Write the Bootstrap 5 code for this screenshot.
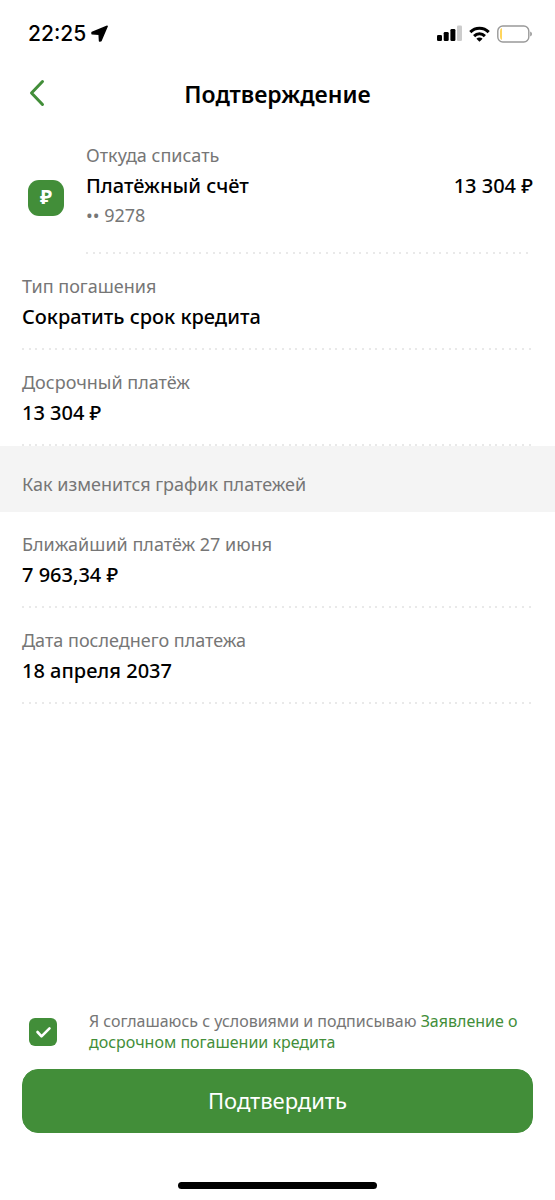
<!DOCTYPE html>
<html lang="ru">
<head>
<meta charset="utf-8">
<meta name="viewport" content="width=device-width, initial-scale=1">
<title>Подтверждение</title>
<link href="https://cdn.jsdelivr.net/npm/bootstrap@5.3.0/dist/css/bootstrap.min.css" rel="stylesheet">
<style>
  :root { --brand: #428e39; --muted: #767676; --side: 22px; }
  body { font-family: "Noto Sans", "Open Sans", sans-serif; color: #000; background: #fff; }
  .side { padding-left: var(--side); padding-right: var(--side); }
  .status { height: 66px; padding: 1px 23px 0 28px; font-family: Inter, sans-serif; font-size: 21px; font-weight: 500; line-height: 24px; }
  .status-icons { gap: 7px; }
  .topbar { display: grid; grid-template-columns: 32px 1fr 32px; height: 56px; }
  .topbar h1 { font-size: 23px; line-height: 32px; font-weight: 600; }
  .back { width: 32px; height: 32px; }
  .caption { font-size: 18px; line-height: 30px; color: var(--muted); font-weight: 400; }
  .value { font-size: 20px; line-height: 32px; font-weight: 500; }
  .dotted::after { content: ""; display: block; height: 2px;
    background: linear-gradient(90deg, #e9e9e9 2px, transparent 2px 7px, #e9e9e9 7px 9px, transparent 9px 13px, #e9e9e9 13px 15px, transparent 15px) 0 0 / 20px 2px; }
  .account { padding-top: 18px; }
  .account-icon { width: 36px; height: 36px; margin: 40px 22px 0 6px; border-radius: 11px; background: var(--brand); color: #fff; font-size: 20px; line-height: 34px; font-weight: 700; }
  .account-text { padding-bottom: 24px; }
  .account-text .account-number { line-height: 26px; }
  .detail { padding-top: 17px; }
  .detail dd { padding-bottom: 15px; }
  .band { background: #f4f4f4; padding-top: 23px; padding-bottom: 13px; }
  .agree { gap: 32px; padding: 0 6px 0 7px; }
  .agree .form-check-input { width: 28px; height: 28px; border-radius: 6px; border: 0; background-size: 28px; }
  .agree .form-check-input:checked { background-color: var(--brand);
    background-image: url("data:image/svg+xml,%3Csvg xmlns='http://www.w3.org/2000/svg' viewBox='0 0 28 28'%3E%3Cpath d='M8.5 14l4 4.3 8-8' fill='none' stroke='%23fff' stroke-width='2.6' stroke-linecap='round' stroke-linejoin='round'/%3E%3C/svg%3E"); }
  .agree label { font-size: 16px; line-height: 21px; color: var(--muted); }
  .agree a { color: var(--brand); }
  .confirm { height: 64px; margin-top: 16px; border-radius: 16px; font-size: 22px; line-height: 32px; padding: 0 0 2px;
    --bs-btn-color: #fff; --bs-btn-bg: var(--brand); --bs-btn-border-color: var(--brand); --bs-btn-hover-color: #fff; --bs-btn-hover-bg: #387a30; --bs-btn-hover-border-color: #387a30; }
  .home { width: 36%; height: 7px; margin: 49px auto 11px; background: #000; }
</style>
</head>
<body>
<div class="min-vh-100 d-flex flex-column">
  <div class="status d-flex align-items-center justify-content-between">
    <div class="d-flex align-items-center gap-1">
      <span>22:25</span>
      <svg width="18" height="18" viewBox="0 0 18 18" aria-hidden="true"><path d="M17.200 1.200 11 15.800 9.500 16 9.100 9.200 2 8.700 2 7.500Z" fill="#000" stroke="#000" stroke-width="1.400" stroke-linejoin="round"/></svg>
    </div>
    <div class="status-icons d-flex align-items-center">
      <svg width="25" height="17" viewBox="0 0 25 17" aria-hidden="true"><rect y="10" width="5" height="6" rx="1.300"/><rect x="6.700" y="7" width="5" height="9" rx="1.300"/><rect x="13.400" y="4" width="5" height="12" rx="1.300"/><rect x="20" y="0.500" width="5" height="15.500" rx="1.300" fill="#ccc"/></svg>
      <svg width="21" height="16" viewBox="0 0 20 16" aria-hidden="true" fill="none" stroke="#000" stroke-width="3"><path d="M.8 6.100a13 13 0 0 1 18.400 0"/><path d="M4.600 10.100a7.600 7.600 0 0 1 10.800 0"/><path d="M10 15.800 6.900 12.700a4.400 4.400 0 0 1 6.200 0Z" fill="#000" stroke="none"/></svg>
      <svg width="35" height="18" viewBox="0 0 35 18" aria-hidden="true"><rect x=".8" y="1" width="31" height="16" rx="5" fill="none" stroke="#999" stroke-width="1.400"/><path d="M3 6q0-2.500 2-3V15q-2-.5-2-3Z" fill="#ffd55c"/><path d="M33.200 6.500q1.800.6 1.800 2.500t-1.800 2.500Z" fill="#999"/></svg>
    </div>
  </div>

  <header class="topbar side">
    <button type="button" class="back btn p-0 border-0 d-flex align-items-center justify-content-center mt-2 pt-1" aria-label="Назад">
      <svg width="32" height="32" viewBox="0 0 32 32" aria-hidden="true"><path d="M20.500 5.500 9.500 17 20.500 28.500" fill="none" stroke="#428e39" stroke-width="3" stroke-linecap="round" stroke-linejoin="round"/></svg>
    </button>
    <h1 class="text-center mb-0 mt-2 pt-1">Подтверждение</h1>
  </header>

  <main>
    <section class="account side d-flex">
      <div class="account-icon flex-shrink-0 text-center">₽</div>
      <div class="flex-grow-1 dotted">
        <div class="account-text">
          <div class="caption">Откуда списать</div>
          <div class="value d-flex justify-content-between"><span>Платёжный счёт</span><span>13 304 ₽</span></div>
          <div class="caption account-number">•• 9278</div>
        </div>
      </div>
    </section>

    <dl class="mb-0">
      <div class="side"><div class="detail dotted"><dt class="caption">Тип погашения</dt><dd class="value mb-0">Сократить срок кредита</dd></div></div>
      <div class="side"><div class="detail dotted"><dt class="caption">Досрочный платёж</dt><dd class="value mb-0">13 304 ₽</dd></div></div>
    </dl>
    <h2 class="band side caption mb-0">Как изменится график платежей</h2>
    <dl class="mb-0">
      <div class="side"><div class="detail dotted"><dt class="caption">Ближайший платёж 27 июня</dt><dd class="value mb-0">7 963,34 ₽</dd></div></div>
      <div class="side"><div class="detail dotted"><dt class="caption">Дата последнего платежа</dt><dd class="value mb-0">18 апреля 2037</dd></div></div>
    </dl>
  </main>

  <footer class="mt-auto">
    <div class="side">
      <div class="agree d-flex align-items-center">
        <input class="form-check-input flex-shrink-0 m-0" type="checkbox" id="agree" checked>
        <label for="agree">Я соглашаюсь с условиями и подписываю <a href="#" class="text-decoration-none">Заявление о досрочном погашении кредита</a></label>
      </div>
      <button type="button" class="confirm btn w-100">Подтвердить</button>
    </div>
    <div class="home rounded-pill"></div>
  </footer>
</div>
<script src="https://cdn.jsdelivr.net/npm/bootstrap@5.3.0/dist/js/bootstrap.bundle.min.js"></script>
</body>
</html>
